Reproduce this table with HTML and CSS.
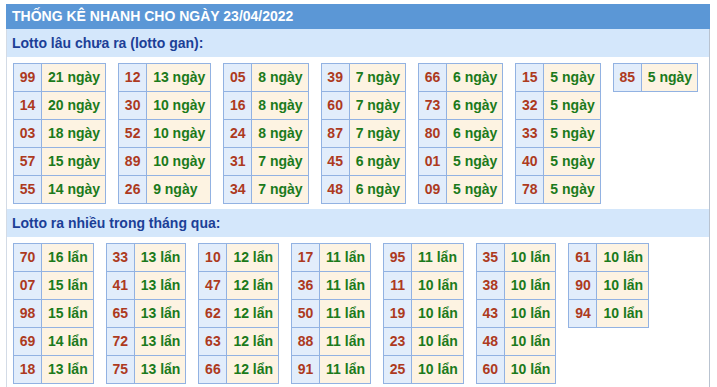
FILE: index.html
```html
<!DOCTYPE html>
<html lang="vi">
<head>
<meta charset="utf-8">
<link rel="stylesheet" href="styles.css">
</head>
<body>
<div class="title">THỐNG KÊ NHANH CHO NGÀY 23/04/2022</div>
<div class="box">
  <div class="sec">Lotto lâu chưa ra (lotto gan):</div>
  <div class="tables">
    <div class="t"><span class="n">99</span><span class="v">21 ngày</span><span class="n">14</span><span class="v">20 ngày</span><span class="n">03</span><span class="v">18 ngày</span><span class="n">57</span><span class="v">15 ngày</span><span class="n">55</span><span class="v">14 ngày</span></div>
    <div class="t"><span class="n">12</span><span class="v">13 ngày</span><span class="n">30</span><span class="v">10 ngày</span><span class="n">52</span><span class="v">10 ngày</span><span class="n">89</span><span class="v">10 ngày</span><span class="n">26</span><span class="v">9 ngày</span></div>
    <div class="t"><span class="n">05</span><span class="v">8 ngày</span><span class="n">16</span><span class="v">8 ngày</span><span class="n">24</span><span class="v">8 ngày</span><span class="n">31</span><span class="v">7 ngày</span><span class="n">34</span><span class="v">7 ngày</span></div>
    <div class="t"><span class="n">39</span><span class="v">7 ngày</span><span class="n">60</span><span class="v">7 ngày</span><span class="n">87</span><span class="v">7 ngày</span><span class="n">45</span><span class="v">6 ngày</span><span class="n">48</span><span class="v">6 ngày</span></div>
    <div class="t"><span class="n">66</span><span class="v">6 ngày</span><span class="n">73</span><span class="v">6 ngày</span><span class="n">80</span><span class="v">6 ngày</span><span class="n">01</span><span class="v">5 ngày</span><span class="n">09</span><span class="v">5 ngày</span></div>
    <div class="t"><span class="n">15</span><span class="v">5 ngày</span><span class="n">32</span><span class="v">5 ngày</span><span class="n">33</span><span class="v">5 ngày</span><span class="n">40</span><span class="v">5 ngày</span><span class="n">78</span><span class="v">5 ngày</span></div>
    <div class="t"><span class="n">85</span><span class="v">5 ngày</span></div>
  </div>
  <div class="sec">Lotto ra nhiều trong tháng qua:</div>
  <div class="tables">
    <div class="t"><span class="n">70</span><span class="v">16 lẩn</span><span class="n">07</span><span class="v">15 lẩn</span><span class="n">98</span><span class="v">15 lẩn</span><span class="n">69</span><span class="v">14 lẩn</span><span class="n">18</span><span class="v">13 lẩn</span></div>
    <div class="t"><span class="n">33</span><span class="v">13 lẩn</span><span class="n">41</span><span class="v">13 lẩn</span><span class="n">65</span><span class="v">13 lẩn</span><span class="n">72</span><span class="v">13 lẩn</span><span class="n">75</span><span class="v">13 lẩn</span></div>
    <div class="t"><span class="n">10</span><span class="v">12 lẩn</span><span class="n">47</span><span class="v">12 lẩn</span><span class="n">62</span><span class="v">12 lẩn</span><span class="n">63</span><span class="v">12 lẩn</span><span class="n">66</span><span class="v">12 lẩn</span></div>
    <div class="t"><span class="n">17</span><span class="v">11 lẩn</span><span class="n">36</span><span class="v">11 lẩn</span><span class="n">50</span><span class="v">11 lẩn</span><span class="n">88</span><span class="v">11 lẩn</span><span class="n">91</span><span class="v">11 lẩn</span></div>
    <div class="t"><span class="n">95</span><span class="v">11 lẩn</span><span class="n">11</span><span class="v">10 lẩn</span><span class="n">19</span><span class="v">10 lẩn</span><span class="n">23</span><span class="v">10 lẩn</span><span class="n">25</span><span class="v">10 lẩn</span></div>
    <div class="t"><span class="n">35</span><span class="v">10 lẩn</span><span class="n">38</span><span class="v">10 lẩn</span><span class="n">43</span><span class="v">10 lẩn</span><span class="n">48</span><span class="v">10 lẩn</span><span class="n">60</span><span class="v">10 lẩn</span></div>
    <div class="t"><span class="n">61</span><span class="v">10 lẩn</span><span class="n">90</span><span class="v">10 lẩn</span><span class="n">94</span><span class="v">10 lẩn</span></div>
  </div>
</div>
</body>
</html>
```
FILE: styles.css
```css
html, body {
  margin: 0;
  padding: 0;
  background: #ffffff;
}
body {
  padding: 4px 0 0 6px;
  font-family: "Liberation Sans", Arial, sans-serif;
  font-weight: bold;
  font-size: 14px;
}
.title {
  width: 704px;
  height: 25px;
  box-sizing: border-box;
  background: #5b97d6;
  color: #ffffff;
  line-height: 25px;
  padding-left: 6px;
}
.box {
  width: 704px;
  box-sizing: border-box;
  border-left: 1px solid #d3dbe6;
  border-right: 1px solid #b9c3d0;
  min-height: 400px;
}
.sec {
  height: 28px;
  line-height: 28px;
  background: #d4e7fb;
  color: #1c3f97;
  padding-left: 5px;
}
.tables {
  display: flex;
  align-items: flex-start;
  gap: 12px;
  padding: 6px 0 5px 6px;
}
.t {
  display: grid;
  grid-template-columns: 28px auto;
  border-top: 1px solid #92b2e2;
  border-left: 1px solid #92b2e2;
}
.n, .v {
  height: 28px;
  box-sizing: border-box;
  border-right: 1px solid #92b2e2;
  border-bottom: 1px solid #92b2e2;
  line-height: 27px;
  white-space: nowrap;
}
.n {
  background: #e2edfb;
  color: #ad3a1e;
  text-align: center;
}
.v {
  background: #fdf3e2;
  color: #1b7a1b;
  padding: 0 5px 0 6px;
}
```
